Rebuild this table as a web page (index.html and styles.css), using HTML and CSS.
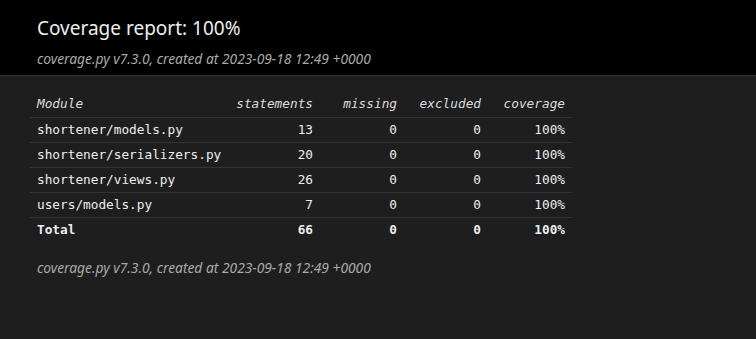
FILE: index.html
```html
<!DOCTYPE html>
<html lang="en">
<head>
  <meta charset="UTF-8">
  <title>Coverage report</title>
  <link rel="stylesheet" href="styles.css">
</head>
<body>
  <header>
    <div class="content">
      <h1>Coverage report: <span class="pc_cov">100%</span></h1>
      <p class="text">coverage.py v7.3.0, created at 2023-09-18 12:49 +0000</p>
    </div>
  </header>
  <main id="index">
    <table class="index">
      <colgroup>
        <col class="col-name">
        <col class="col-stmt">
        <col class="col-num">
        <col class="col-num">
        <col class="col-num">
      </colgroup>
      <thead>
        <tr class="tablehead">
          <th class="name">Module</th>
          <th>statements</th>
          <th>missing</th>
          <th>excluded</th>
          <th>coverage</th>
        </tr>
      </thead>
      <tbody>
        <tr class="file">
          <td class="name">shortener/models.py</td>
          <td>13</td><td>0</td><td>0</td><td>100%</td>
        </tr>
        <tr class="file">
          <td class="name">shortener/serializers.py</td>
          <td>20</td><td>0</td><td>0</td><td>100%</td>
        </tr>
        <tr class="file">
          <td class="name">shortener/views.py</td>
          <td>26</td><td>0</td><td>0</td><td>100%</td>
        </tr>
        <tr class="file">
          <td class="name">users/models.py</td>
          <td>7</td><td>0</td><td>0</td><td>100%</td>
        </tr>
      </tbody>
      <tfoot>
        <tr class="total">
          <td class="name">Total</td>
          <td>66</td><td>0</td><td>0</td><td>100%</td>
        </tr>
      </tfoot>
    </table>
  </main>
  <footer id="footer">
    <p class="text">coverage.py v7.3.0, created at 2023-09-18 12:49 +0000</p>
  </footer>
</body>
</html>
```

FILE: styles.css
```css
* { box-sizing: border-box; }
html, body, h1, p, table, td, th { margin: 0; padding: 0; border: 0; font-weight: inherit; font-style: inherit; font-size: 100%; font-family: inherit; }
body { font-family: "Noto Sans", "Open Sans", sans-serif; font-size: 16px; background: #1e1e1e; color: #eee; }
p { font-size: 14px; line-height: 1.4em; }
table { border-collapse: collapse; }
header { background: #000; width: 100%; height: 76px; border-bottom: 1px solid #333; }
header .content { padding: 15px 37px 0; }
h1 { font-size: 19px; line-height: 27px; display: inline-block; }
header p.text { margin: 7px 0 0; font-size: 13.8px; color: #aaa; font-style: italic; }
#index { margin: 16px 0 0 37px; font-family: "DejaVu Sans Mono", monospace; font-size: 12.75px; }
#index table.index { margin-left: -7px; table-layout: fixed; width: 542px; }
.col-name { width: 198px; }
.col-stmt { width: 92px; }
.col-num { width: 84px; }
#index td, #index th { text-align: right; height: 25px; padding: 0 7px; line-height: 24px; border-bottom: 1px solid #333; white-space: nowrap; }
#index td.name, #index th.name { text-align: left; }
#index th { font-style: italic; color: #ddd; }
#index tr.total td { font-weight: bold; border-bottom: none; }
#footer { margin: 16px 37px; }
#footer p.text { color: #aaa; font-style: italic; font-size: 13.8px; }
```
